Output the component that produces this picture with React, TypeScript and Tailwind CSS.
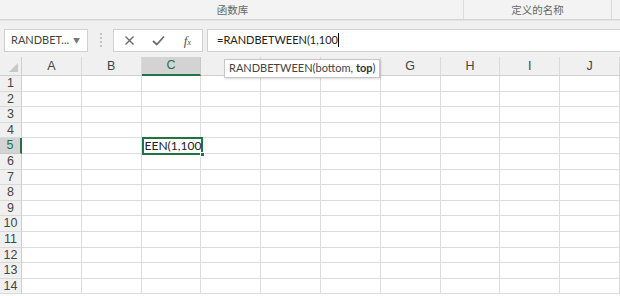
import { Fragment } from "react";

const COLS = ["A", "B", "C", "D", "E", "F", "G", "H", "I", "J"];
// D, E and F headers sit under the function tooltip
const HIDDEN = ["D", "E", "F"];
const ROWS = Array.from({ length: 14 }, (_, i) => i + 1);

function CrossIcon() {
  return (
    <svg width="11" height="11" viewBox="0 0 11 11" className="text-[#6b6b6b]">
      <path d="M1.5 1.5 L9.5 9.5 M9.5 1.5 L1.5 9.5" stroke="currentColor" strokeWidth="1.4" />
    </svg>
  );
}

function CheckIcon() {
  return (
    <svg width="13" height="11" viewBox="0 0 13 11" className="text-[#6b6b6b]">
      <path d="M1 6 L4.8 9.5 L12 1.5" stroke="currentColor" strokeWidth="1.8" fill="none" />
    </svg>
  );
}

export default function App() {
  return (
    <div className="w-[620px] h-[296px] overflow-hidden bg-white flex flex-col font-['Lato','Noto_Sans_CJK_SC',sans-serif] text-[#444]">
      {/* ribbon group labels */}
      <div className="h-[20px] bg-[#f3f3f3] flex text-[10.5px] text-[#666] border-b border-[#d6d6d6] font-['Noto_Sans_CJK_SC',sans-serif]">
        <div className="w-[463px] flex items-center justify-center pl-[2px]">函数库</div>
        <div className="w-[149px] border-x border-[#dcdcdc] flex items-center justify-center">
          定义的名称
        </div>
      </div>

      {/* formula bar */}
      <div className="h-[37px] bg-[#f0f0f0] border-t border-[#e2e2e2] flex items-center pl-[4px] pt-[2px]">
        <div className="w-[84px] h-[23px] bg-white border border-[#d0d0d0] flex items-center justify-between pl-[6px] pr-[7px] text-[11px] text-[#444]">
          <span>RANDBET...</span>
          <span className="text-[7px] text-[#777]">▼</span>
        </div>
        <div className="w-[25px] flex flex-col items-center gap-[2px]">
          <span className="w-[2px] h-[2px] bg-[#c4c4c4]" />
          <span className="w-[2px] h-[2px] bg-[#c4c4c4]" />
          <span className="w-[2px] h-[2px] bg-[#c4c4c4]" />
          <span className="w-[2px] h-[2px] bg-[#c4c4c4]" />
        </div>
        <div className="w-[90px] h-[23px] bg-white border border-[#d0d0d0] flex items-center">
          <span className="w-[30px] flex justify-center pl-[2px]"><CrossIcon /></span>
          <span className="w-[30px] flex justify-center"><CheckIcon /></span>
          <span className="w-[30px] flex justify-center items-center font-['Liberation_Serif',serif] italic text-[13px] text-[#555] leading-none">
            <span>f</span>
            <span className="text-[8.5px] relative top-[2px]">x</span>
          </span>
        </div>
        <div className="ml-[4px] flex-1 h-[23px] bg-white border border-[#d0d0d0] border-r-0 flex items-center pl-[9px] text-[11px] text-[#222]">
          <span>=RANDBETWEEN(1,100</span>
          <span className="w-px h-[14px] bg-black" />
        </div>
      </div>

      {/* grid */}
      <div className="relative flex-1">
        <div className="grid grid-cols-[22px_repeat(10,59.8px)] grid-rows-[19px_repeat(14,15.6px)] text-[12.5px] font-['Liberation_Sans',sans-serif]">
          <div className="bg-[#f0f0f0] border-b border-r border-[#cfcfcf] flex items-end justify-end pr-[3px] pb-[3px]">
            <svg width="9" height="9" viewBox="0 0 9 9">
              <path d="M9 0 L9 9 L0 9 Z" fill="#c8c8c8" />
            </svg>
          </div>
          {COLS.map((c) => (
            <div
              key={c}
              className={
                c === "C"
                  ? "bg-[#d3d3d3] border-b-2 border-b-[#217346] border-r border-r-[#c8c8c8] flex items-center justify-center text-[#217346] leading-none"
                  : "bg-[#f0f0f0] border-b border-b-[#cfcfcf] border-r border-r-[#dadada] flex items-center justify-center text-[#444] leading-none"
              }
            >
              {HIDDEN.includes(c) ? null : c}
            </div>
          ))}
          {ROWS.map((r) => (
            <Fragment key={r}>
              <div
                className={
                  r === 5
                    ? "bg-[#d3d3d3] border-r-2 border-r-[#217346] border-b border-b-[#c8c8c8] flex items-center justify-center text-[#217346] leading-none"
                    : "bg-[#f0f0f0] border-r border-r-[#cfcfcf] border-b border-b-[#dadada] flex items-center justify-center text-[#444] leading-none"
                }
              >
                {r}
              </div>
              {COLS.map((c) => (
                <div key={c} className="border-r border-b border-[#dcdcdc]" />
              ))}
            </Fragment>
          ))}
        </div>

        {/* active cell C5 */}
        <div className="absolute left-[141.6px] top-[80.4px] w-[61.8px] h-[17.6px] border-2 border-[#217346] bg-white flex items-center pl-[1px] text-[12px] text-[#222] leading-none">
          <span>EEN(1,100</span>
          <span className="w-px h-[13px] bg-black" />
          <span className="absolute right-[-4px] bottom-[-4px] w-[5px] h-[5px] bg-[#217346] border border-white" />
        </div>

        {/* function tooltip */}
        <div className="absolute left-[224px] top-[2px] h-[19px] px-[4px] bg-white border border-[#c6c6c6] shadow-[1px_1px_2px_rgba(0,0,0,0.15)] flex items-center text-[11px] text-[#444] whitespace-nowrap">
          RANDBETWEEN(bottom,&nbsp;<b className="font-bold text-[#333]">top</b>)
        </div>
      </div>
    </div>
  );
}
